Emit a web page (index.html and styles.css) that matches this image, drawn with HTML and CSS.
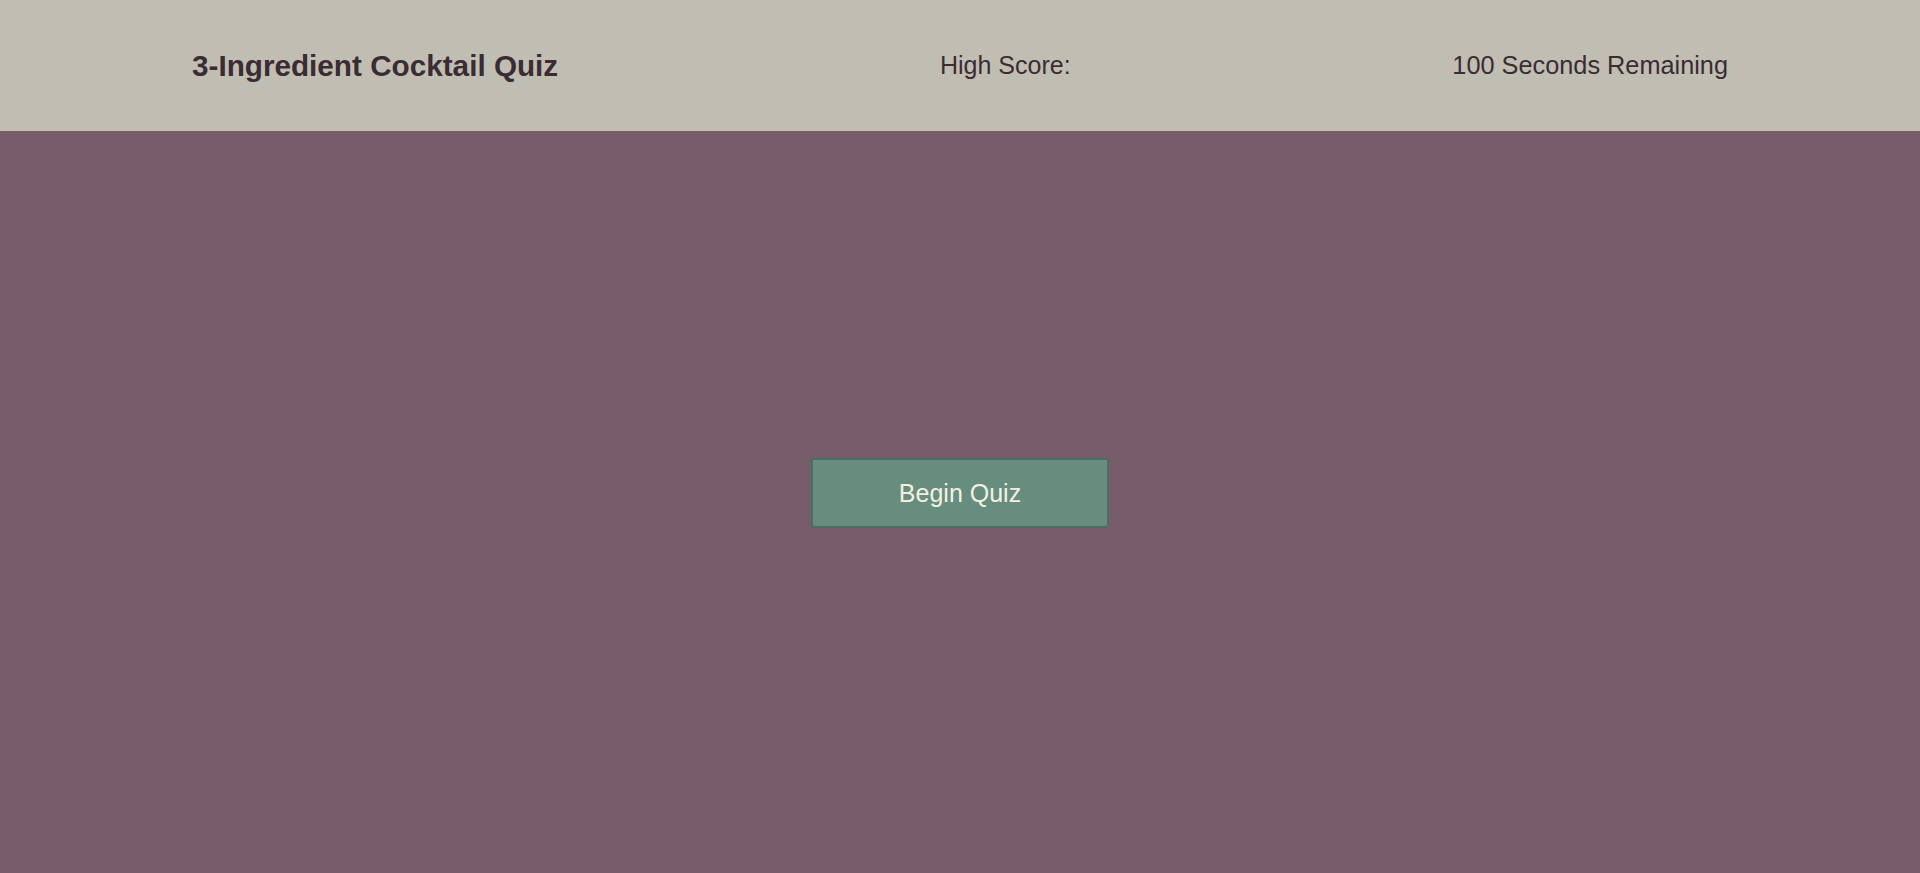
FILE: index.html
```html
<!DOCTYPE html>
<html lang="en">
<head>
<meta charset="utf-8">
<title>3-Ingredient Cocktail Quiz</title>
<link rel="stylesheet" href="styles.css">
</head>
<body>
<header class="topbar">
  <h1 class="title">3-Ingredient Cocktail Quiz</h1>
  <div class="high-score">High Score:</div>
  <div class="timer">100 Seconds Remaining</div>
</header>
<main class="stage">
  <button class="begin-btn" type="button">Begin Quiz</button>
</main>
</body>
</html>
```

FILE: styles.css
```css
html, body {
  margin: 0;
  padding: 0;
  height: 100%;
}
body {
  background: #775c69;
  font-family: "Liberation Sans", Arial, sans-serif;
  color: #3a2c32;
}
.topbar {
  height: 131px;
  box-sizing: border-box;
  background: #c0beb2;
  padding: 0 192px;
  display: flex;
  align-items: center;
  justify-content: space-between;
}
.title {
  margin: 0;
  font-size: 29.7px;
  font-weight: bold;
  line-height: 1;
}
.high-score {
  font-size: 25px;
  line-height: 1;
}
.timer {
  font-size: 25.3px;
  line-height: 1;
}
.stage {
  display: flex;
  justify-content: center;
  padding-top: 327px;
}
.begin-btn {
  width: 298px;
  height: 70px;
  box-sizing: border-box;
  background: #668d7d;
  border: 2px solid #4b6f60;
  border-radius: 3px;
  color: #f3f0e2;
  font-family: "Liberation Sans", Arial, sans-serif;
  font-size: 25px;
  cursor: pointer;
}
```
